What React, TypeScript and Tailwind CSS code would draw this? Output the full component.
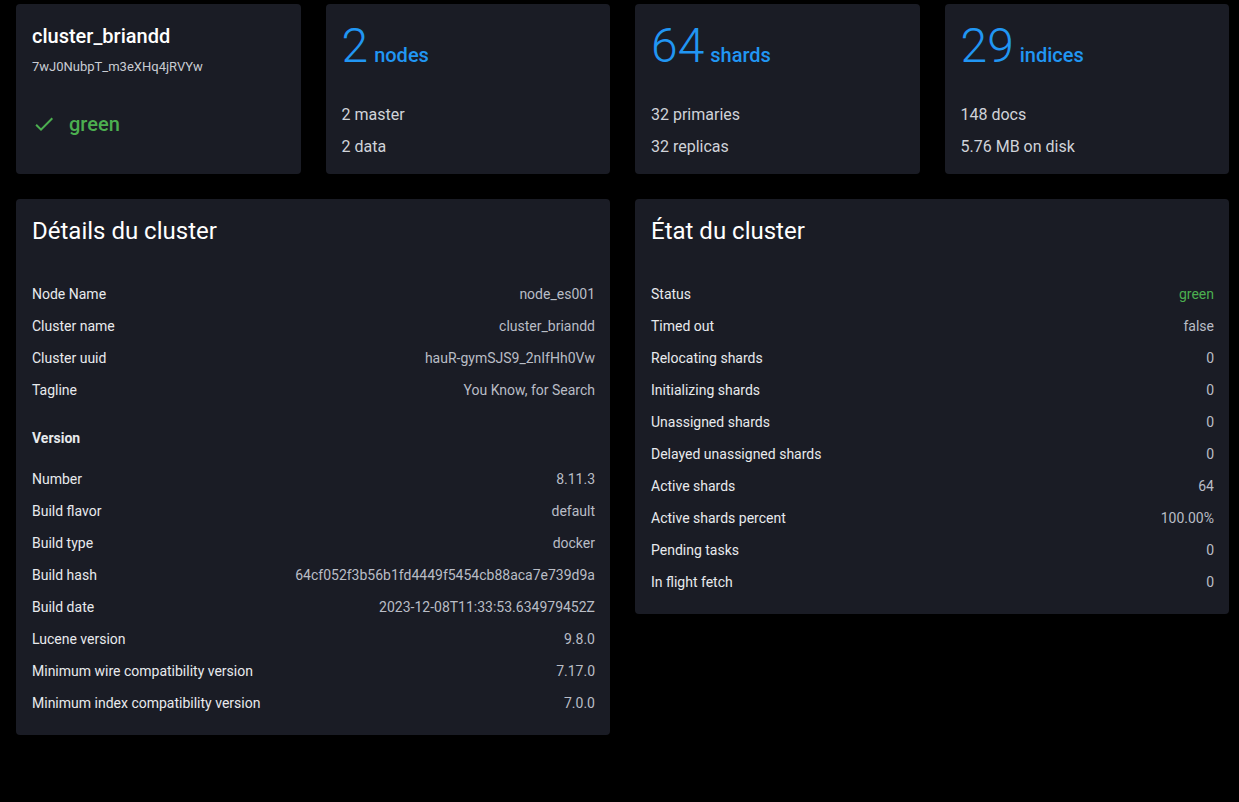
import React from "react";

const font = { fontFamily: "Roboto, 'Noto Sans', sans-serif" };

function StatCard({ value, unit, lines }: { value: string; unit: string; lines: string[] }) {
  return (
    <div className="rounded bg-[#1a1c25] p-4 h-[170px]">
      <div className="flex items-baseline gap-[6px] leading-[52px]">
        <span className="text-[48px] font-light text-[#2196f3]">{value}</span>
        <span className="text-[20px] font-medium leading-5 text-[#2196f3]">{unit}</span>
      </div>
      <div className="mt-[27px]">
        {lines.map((l) => (
          <div key={l} className="h-8 leading-8 text-[16px] text-[#d0d3d9]">
            {l}
          </div>
        ))}
      </div>
    </div>
  );
}

function Row({ label, value, green }: { label: string; value: string; green?: boolean }) {
  return (
    <div className="flex h-8 items-center justify-between text-[14px]">
      <span className="text-[#e8eaed]">{label}</span>
      <span className={green ? "text-[#4caf50]" : "text-[#b9bdc6]"}>{value}</span>
    </div>
  );
}

export default function App() {
  const details = [
    ["Node Name", "node_es001"],
    ["Cluster name", "cluster_briandd"],
    ["Cluster uuid", "hauR-gymSJS9_2nIfHh0Vw"],
    ["Tagline", "You Know, for Search"],
  ];
  const version = [
    ["Number", "8.11.3"],
    ["Build flavor", "default"],
    ["Build type", "docker"],
    ["Build hash", "64cf052f3b56b1fd4449f5454cb88aca7e739d9a"],
    ["Build date", "2023-12-08T11:33:53.634979452Z"],
    ["Lucene version", "9.8.0"],
    ["Minimum wire compatibility version", "7.17.0"],
    ["Minimum index compatibility version", "7.0.0"],
  ];
  const health = [
    ["Status", "green"],
    ["Timed out", "false"],
    ["Relocating shards", "0"],
    ["Initializing shards", "0"],
    ["Unassigned shards", "0"],
    ["Delayed unassigned shards", "0"],
    ["Active shards", "64"],
    ["Active shards percent", "100.00%"],
    ["Pending tasks", "0"],
    ["In flight fetch", "0"],
  ];

  return (
    <div className="min-h-[802px] bg-black pl-4 pr-[10px] pt-1" style={font}>
      <div className="grid grid-cols-4 gap-[25px]">
        <div className="rounded bg-[#1a1c25] p-4 h-[170px]">
          <div className="text-[20px] font-medium leading-8 text-white">cluster_briandd</div>
          <div className="mt-[5px] text-[13px] leading-5 text-[#c9ccd3]">7wJ0NubpT_m3eXHq4jRVYw</div>
          <div className="mt-[31px] flex h-8 items-center gap-[13px]">
            <svg width="24" height="24" viewBox="0 0 24 24" fill="#4caf50">
              <path d="M9 16.17 4.83 12l-1.42 1.41L9 19 21 7l-1.41-1.41z" />
            </svg>
            <span className="text-[20px] font-medium text-[#4caf50]">green</span>
          </div>
        </div>
        <StatCard value="2" unit="nodes" lines={["2 master", "2 data"]} />
        <StatCard value="64" unit="shards" lines={["32 primaries", "32 replicas"]} />
        <StatCard value="29" unit="indices" lines={["148 docs", "5.76 MB on disk"]} />
      </div>

      <div className="mt-[25px] grid grid-cols-2 items-start gap-[25px]">
        <div className="rounded bg-[#1a1c25] pl-4 pr-[15px] pt-4 pb-4">
          <div className="text-[24px] leading-8 text-white">Détails du cluster</div>
          <div className="mt-[31px]">
            {details.map(([l, v]) => (
              <Row key={l} label={l} value={v} />
            ))}
          </div>
          <div className="mt-4 mb-[9px] h-8 leading-8 text-[14px] font-bold text-[#e8eaed]">Version</div>
          {version.map(([l, v]) => (
            <Row key={l} label={l} value={v} />
          ))}
        </div>
        <div className="rounded bg-[#1a1c25] pl-4 pr-[15px] pt-4 pb-4">
          <div className="text-[24px] leading-8 text-white">État du cluster</div>
          <div className="mt-[31px]">
            {health.map(([l, v]) => (
              <Row key={l} label={l} value={v} green={l === "Status"} />
            ))}
          </div>
        </div>
      </div>
    </div>
  );
}
